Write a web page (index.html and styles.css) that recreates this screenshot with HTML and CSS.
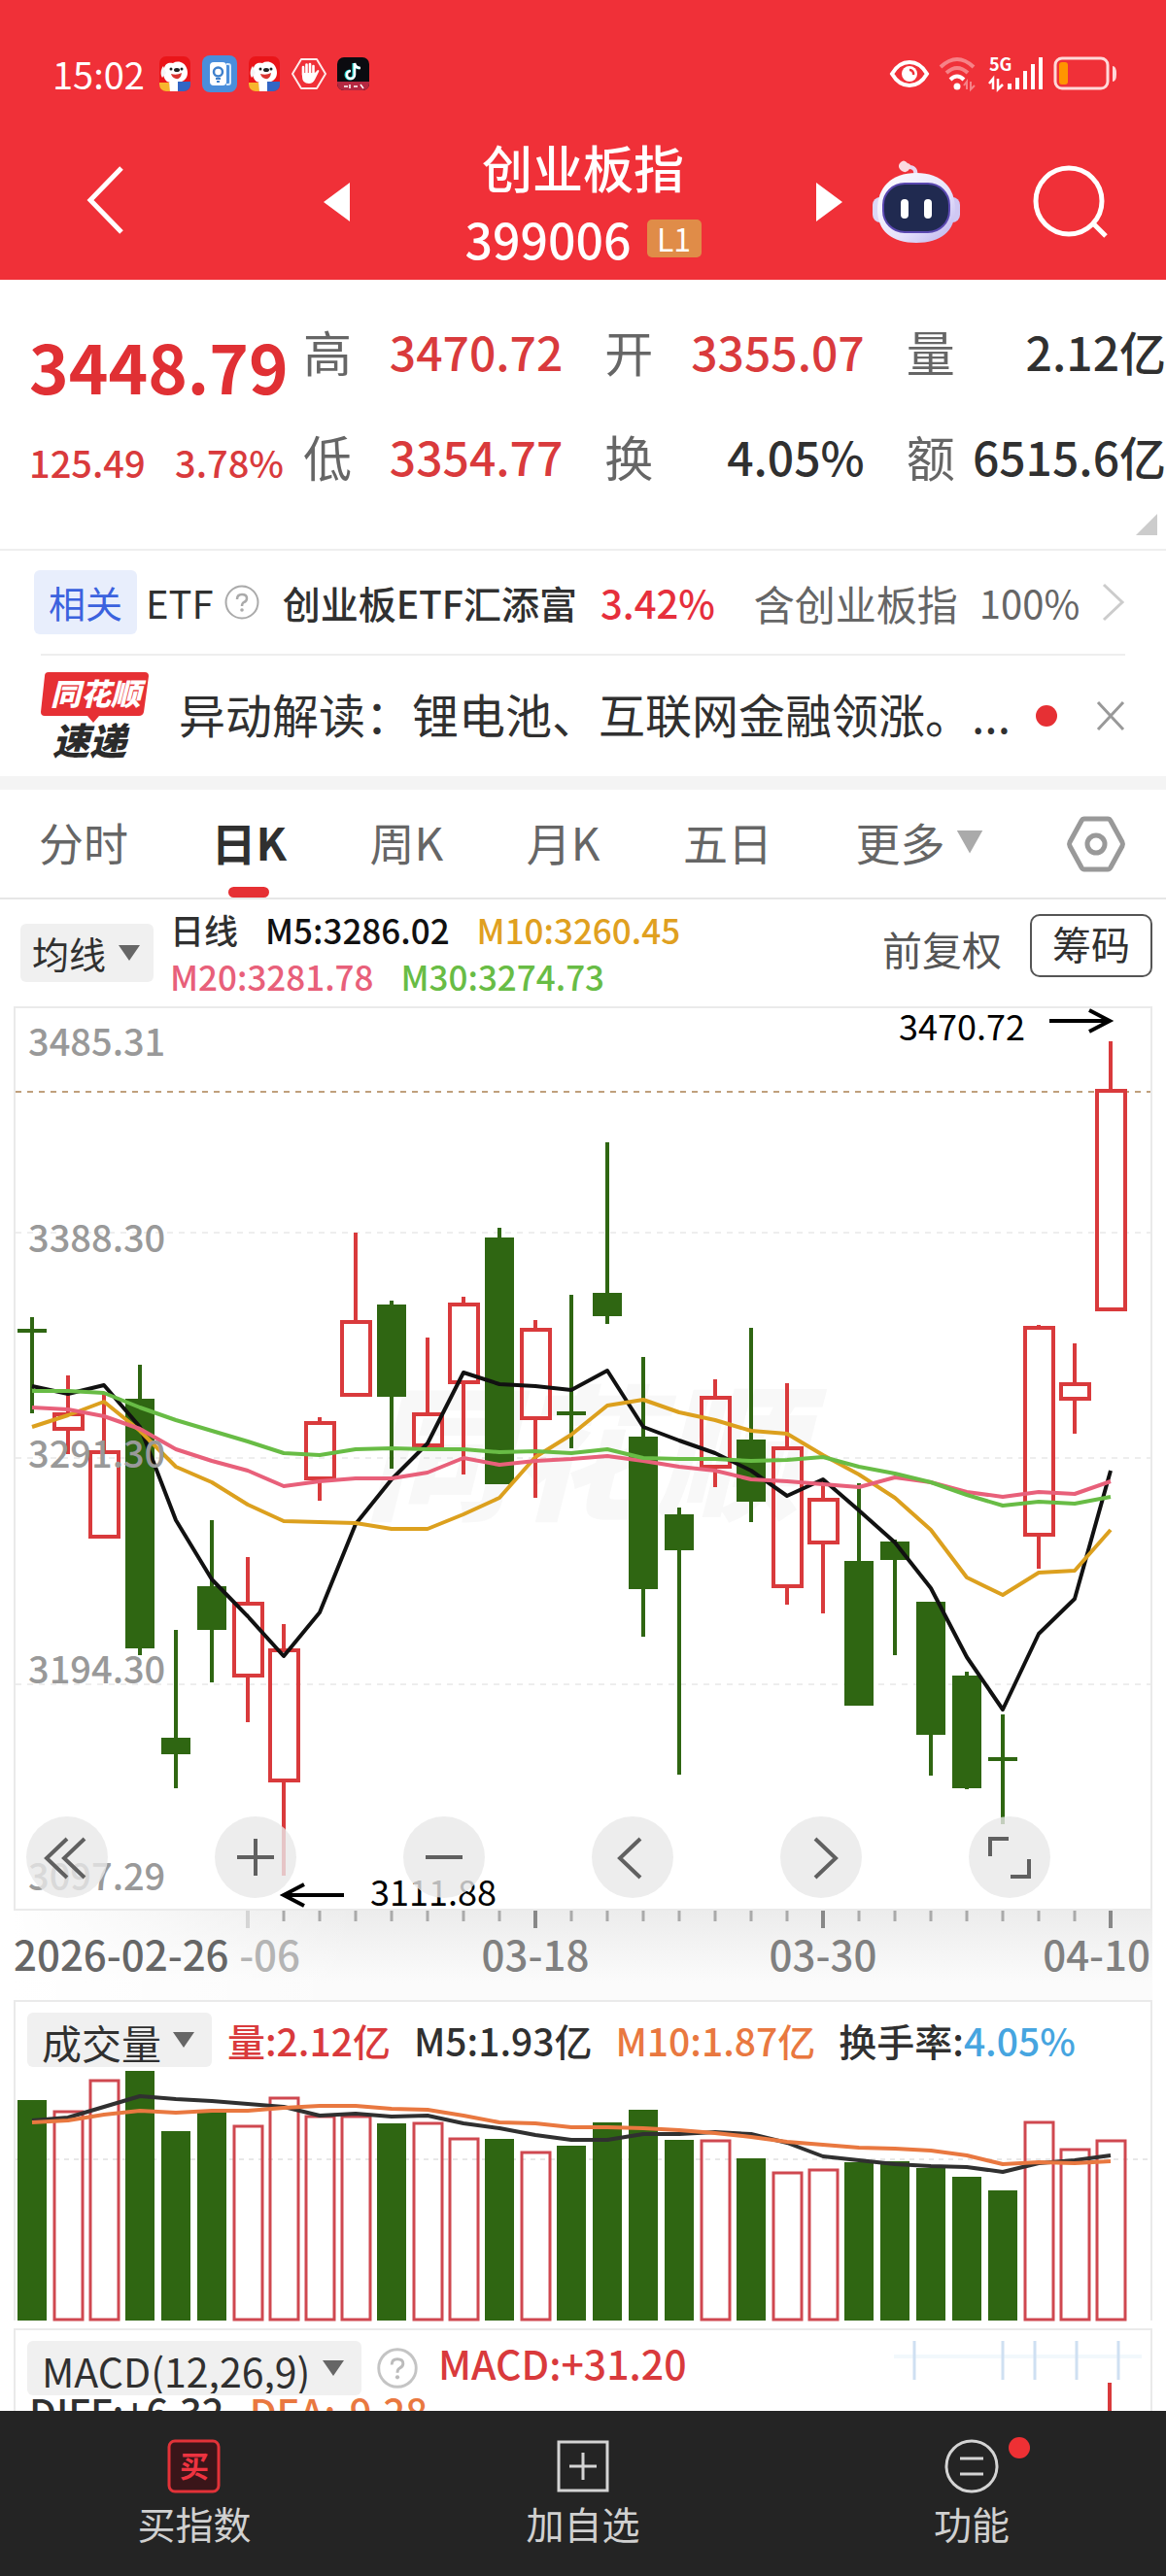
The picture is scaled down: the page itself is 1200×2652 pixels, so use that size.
FILE: index.html
```html
<!DOCTYPE html>
<html lang="zh-CN">
<head>
  <meta charset="UTF-8">
  <meta name="viewport" content="width=device-width, initial-scale=1.0">
  <title>创业板指 399006</title>
  <link rel="stylesheet" href="styles.css">
</head>
<body>
  <div class="app">
    <header class="header">
      <div class="status-bar">
        <span class="time">15:02</span>
        <div class="status-apps">
          <svg width="34" height="36" viewBox="0 0 34 36"><rect x="1" width="32" height="36" rx="7" fill="#ea1519"/><path d="M6 12c1-5 5-6 9-5 5-3 12-1 14 5 2 5 1 10-3 13l-8 4-9-3c-4-3-5-9-3-14z" fill="#fff"/><path d="M5 10c-3 4-3 9-1 12l4-5z" fill="#f5f5f5"/><circle cx="13" cy="13" r="1.500" fill="#222"/><circle cx="24" cy="13" r="1.500" fill="#222"/><ellipse cx="19" cy="14" rx="3" ry="2" fill="#222"/><path d="M13 18q6 2 11-1-1 7-6 6-4-1-5-5z" fill="#d8332f"/><path d="M1 27h10l2 9H8a7 7 0 0 1-7-7z" fill="#f7b52d"/><path d="M11 27h9v9h-8z" fill="#fff"/><path d="M20 26h13v3a7 7 0 0 1-7 7h-6z" fill="#3266c4"/></svg>
          <svg width="36" height="38" viewBox="0 0 36 38"><rect width="36" height="38" rx="8" fill="#4a8edb"/><path d="M25 9h2q2 0 2 2v17q0 2-2 2h-2" fill="none" stroke="#d6e8fb" stroke-width="2"/><rect x="8" y="7" width="17" height="24" rx="4" fill="#fff"/><circle cx="16.500" cy="17" r="4.500" fill="none" stroke="#3f80cc" stroke-width="2.500"/><path d="M14 24h5M15 27h3" stroke="#3f80cc" stroke-width="2"/></svg>
          <svg width="34" height="36" viewBox="0 0 34 36"><rect x="1" width="32" height="36" rx="7" fill="#ea1519"/><path d="M6 12c1-5 5-6 9-5 5-3 12-1 14 5 2 5 1 10-3 13l-8 4-9-3c-4-3-5-9-3-14z" fill="#fff"/><path d="M5 10c-3 4-3 9-1 12l4-5z" fill="#f5f5f5"/><circle cx="13" cy="13" r="1.500" fill="#222"/><circle cx="24" cy="13" r="1.500" fill="#222"/><ellipse cx="19" cy="14" rx="3" ry="2" fill="#222"/><path d="M13 18q6 2 11-1-1 7-6 6-4-1-5-5z" fill="#d8332f"/><path d="M1 27h10l2 9H8a7 7 0 0 1-7-7z" fill="#f7b52d"/><path d="M11 27h9v9h-8z" fill="#fff"/><path d="M20 26h13v3a7 7 0 0 1-7 7h-6z" fill="#3266c4"/></svg>
          <svg width="36" height="34" viewBox="0 0 36 34"><path d="M10 2h16l9 15-9 15H10L1 17z" fill="none" stroke="#ffe9e9" stroke-width="2" stroke-linejoin="round"/><path d="M12 18V10M15.500 17V7.500M19 17V7M22.500 18V9" stroke="#fff" stroke-width="2.600" stroke-linecap="round"/><path d="M11 16h13l3-3q2 0 1 2l-4 8q-2 4-6 4-7 0-7-7z" fill="#fff"/></svg>
          <svg width="33" height="34" viewBox="0 0 33 34"><rect width="33" height="34" rx="7" fill="#0b0b10"/><path d="M0 25h33v2a7 7 0 0 1-7 7H7a7 7 0 0 1-7-7z" fill="#b42841"/><path d="M17 6v12a4 4 0 1 1-4-4M17 6q1 5 6 5" fill="none" stroke="#26e3e3" stroke-width="3"/><path d="M18 6v12a4 4 0 1 1-4-4M18 6q1 5 6 5" fill="none" stroke="#fff" stroke-width="2.500"/><path d="M7 30h4M13 28v4M17 30h4M24 28l3 4" stroke="#fff" stroke-width="1.500"/></svg>
        </div>
        <div class="status-system">
          <svg width="40" height="28" viewBox="0 0 40 28"><path d="M2 14Q9 2 20 2t18 12Q31 26 20 26T2 14z" fill="none" stroke="#fff" stroke-width="4"/><circle cx="20" cy="14" r="8" fill="#fff"/><path d="M20 10a4 4 0 0 1 4 5" fill="none" stroke="#f03038" stroke-width="2.500"/></svg>
          <svg width="42" height="34" viewBox="0 0 42 34"><g fill="none" stroke="#fff" stroke-width="4"><path d="M2 10q17-16 34 0M8 16q11-10 22 0" opacity=".4"/><path d="M12 23q7-7 14 0"/></g><circle cx="19" cy="30" r="3.500" fill="#fff"/><path d="M29 33v-8l-3 4M33 25v8l4-4" stroke="#fff" fill="none" stroke-width="2" opacity=".4"/></svg>
          <svg width="56" height="36" viewBox="0 0 56 36"><text x="0" y="15" font-size="18" font-weight="700" fill="#fff">5G</text><path d="M4 34V23l-4 5M9 23v11l5-5" fill="none" stroke="#fff" stroke-width="2.500"/><path d="M21 34v-6M29 34V22M37 34V15M45 34V8M53 34V1" stroke="#fff" stroke-width="4"/></svg>
          <svg width="66" height="36" viewBox="0 0 66 36"><rect x="2" y="2" width="54" height="31" rx="7" fill="none" stroke="#ffd9d9" stroke-width="3"/><rect x="6" y="6" width="9" height="23" rx="3" fill="#ff9500"/><path d="M61 10q4 0 4 8t-4 8z" fill="#ffd9d9"/></svg>
        </div>
      </div>
      <div class="nav">
        <div class="nav-left">
          <button class="icon-btn" aria-label="返回"><svg width="40" height="72" viewBox="0 0 40 72"><path d="M36 3L4 36l32 33" fill="none" stroke="#fff" stroke-width="5"/></svg></button>
        </div>
        <div class="nav-center">
          <button class="icon-btn" aria-label="上一只"><svg width="27" height="40" viewBox="0 0 27 40"><path d="M27 0v40L0 20z" fill="#fff"/></svg></button>
          <div class="title">
            <h1>创业板指</h1>
            <div class="code">399006 <span class="level">L1</span></div>
          </div>
          <button class="icon-btn" aria-label="下一只"><svg width="27" height="40" viewBox="0 0 27 40"><path d="M0 0v40l27-20z" fill="#fff"/></svg></button>
        </div>
        <div class="nav-right">
          <button class="icon-btn" aria-label="智能助手">
            <svg width="92" height="86" viewBox="0 0 92 86">
              <defs>
                <linearGradient id="head" x1="0" y1="0" x2="1" y2="1"><stop offset="0" stop-color="#fff"/><stop offset=".6" stop-color="#e6e2fb"/><stop offset="1" stop-color="#b9b0ec"/></linearGradient>
              </defs>
              <path d="M45 18q2-11-6-11" fill="none" stroke="#e9d5ee" stroke-width="4"/><path d="M29 3q4-5 8 0 5 1 2 6-3 5-8 2-5-4-2-8z" fill="#fbd9df"/>
              <rect x="1" y="38" width="18" height="26" rx="8" fill="#dcd7f7"/><rect x="73" y="38" width="18" height="26" rx="8" fill="#cfc8f3"/>
              <path d="M46 13c26 0 40 15 40 38 0 22-15 34-40 34S6 73 6 51c0-23 14-38 40-38z" fill="url(#head)"/>
              <rect x="12" y="24" width="68" height="50" rx="22" fill="#202a50" stroke="#5a48b0" stroke-width="2"/>
              <path d="M34 44v12M58 44v12" stroke="#fff" stroke-width="8" stroke-linecap="round"/>
            </svg>
          </button>
          <button class="icon-btn" aria-label="搜索"><svg width="78" height="76" viewBox="0 0 78 76"><circle cx="37" cy="37" r="34" fill="none" stroke="#fff" stroke-width="5"/><path d="M62 60l13 13" stroke="#fff" stroke-width="5"/></svg></button>
        </div>
      </div>
    </header>

    <main class="content">
      <section class="quote">
        <div class="price-box">
          <div class="price">3448.79</div>
          <div class="change"><span>125.49</span><span>3.78%</span></div>
        </div>
        <div class="stats">
          <div class="stat"><span>高</span><b class="up">3470.72</b></div>
          <div class="stat"><span>开</span><b class="up">3355.07</b></div>
          <div class="stat"><span>量</span><b>2.12亿</b></div>
          <div class="stat"><span>低</span><b class="up">3354.77</b></div>
          <div class="stat"><span>换</span><b>4.05%</b></div>
          <div class="stat"><span>额</span><b>6515.6亿</b></div>
        </div>
        <div class="corner"></div>
      </section>

      <a class="etf" href="#">
        <span class="tag">相关</span>
        <span class="etf-label">ETF</span>
        <svg class="help" width="36" height="36" viewBox="0 0 36 36"><circle cx="18" cy="18" r="16.500" fill="none" stroke="#aaa" stroke-width="2"/><path d="M13 15q0-5 5-5t5 4q0 3-3 4-2 1-2 4" fill="none" stroke="#aaa" stroke-width="2.500"/><circle cx="18" cy="26" r="1.800" fill="#aaa"/></svg>
        <span class="etf-name">创业板ETF汇添富</span>
        <span class="etf-change">3.42%</span>
        <span class="etf-hold">含创业板指</span>
        <span class="etf-ratio">100%</span>
        <svg class="arrow" width="24" height="40" viewBox="0 0 24 40"><path d="M2 2l19 18L2 38" fill="none" stroke="#ccc" stroke-width="3"/></svg>
      </a>

      <div class="news">
        <svg class="news-logo" width="112" height="92" viewBox="0 0 112 92">
          <path d="M8 1h99q4 0 4 4l-5 37q-1 4-5 4H60l-6 7-6-7H4q-4 0-4-4L4 5q0-4 4-4z" fill="#e63034"/>
          <text x="10" y="35" font-size="31" font-weight="900" font-style="italic" fill="#fff">同花顺</text>
          <text x="12" y="86" font-size="38" font-weight="900" font-style="italic" fill="#2b2b2b">速递</text>
        </svg>
        <a class="news-text" href="#">异动解读：锂电池、互联网金融领涨。...</a>
        <span class="dot"></span>
        <button class="icon-btn" aria-label="关闭"><svg width="30" height="32" viewBox="0 0 30 32"><path d="M2 2l26 28M28 2L2 30" stroke="#999" stroke-width="3"/></svg></button>
      </div>

      <nav class="tabs">
        <button class="tab">分时</button>
        <button class="tab active">日K</button>
        <button class="tab">周K</button>
        <button class="tab">月K</button>
        <button class="tab">五日</button>
        <button class="tab more">更多</button>
        <button class="icon-btn" aria-label="设置"><svg width="62" height="58" viewBox="0 0 62 58"><path d="M19 3h24q2 0 3 2l12 22q1 2 0 4L46 53q-1 2-3 2H19q-2 0-3-2L4 31q-1-2 0-4L16 5q1-2 3-2z" fill="none" stroke="#999" stroke-width="5"/><circle cx="31" cy="29" r="9" fill="none" stroke="#999" stroke-width="5"/></svg></button>
      </nav>

      <div class="ma-bar">
        <label class="drop"><select aria-label="主图指标"><option>均线</option></select></label>
        <div class="legend">
          <div class="legend-row"><span>日线</span><span class="m5">M5:3286.02</span><span class="m10">M10:3260.45</span></div>
          <div class="legend-row"><span class="m20">M20:3281.78</span><span class="m30">M30:3274.73</span></div>
        </div>
        <button class="adjust">前复权</button>
        <button class="chips">筹码</button>
      </div>

      <section class="panel kline">
        <svg id="kline" viewBox="16 1037 1168 927"></svg>
        <div class="tools">
          <button aria-label="最早"><svg viewBox="0 0 84 84"><path d="M42 23L21 43l21 20M60 23L39 43l21 20"/></svg></button>
          <button aria-label="放大"><svg viewBox="0 0 84 84"><path d="M23 42h38M42 23v38"/></svg></button>
          <button aria-label="缩小"><svg viewBox="0 0 84 84"><path d="M23 42h38"/></svg></button>
          <button aria-label="左移"><svg viewBox="0 0 84 84"><path d="M50 23L29 43l21 20"/></svg></button>
          <button aria-label="右移"><svg viewBox="0 0 84 84"><path d="M36 23l21 20-21 20"/></svg></button>
          <button aria-label="全屏"><svg viewBox="0 0 84 84"><path d="M22 41V23h19M62 44v18H43"/></svg></button>
        </div>
      </section>
      <div class="axis"><svg id="axis" viewBox="14 1966 1172 92"></svg></div>

      <section class="panel volume">
        <div class="panel-head">
          <label class="drop"><select aria-label="副图指标一"><option>成交量</option></select></label>
          <span class="up">量:2.12亿</span>
          <span>M5:1.93亿</span>
          <span class="orange">M10:1.87亿</span>
          <span>换手率:<span class="blue">4.05%</span></span>
        </div>
        <svg id="volume" viewBox="16 2131 1168 257"></svg>
      </section>

      <section class="panel macd">
        <div class="panel-head">
          <label class="drop"><select aria-label="副图指标二"><option>MACD(12,26,9)</option></select></label>
          <svg class="help-lg" width="42" height="42" viewBox="0 0 36 36"><circle cx="18" cy="18" r="16.500" fill="none" stroke="#c4c4c4" stroke-width="2.500"/><path d="M13 15q0-5 5-5t5 4q0 3-3 4-2 1-2 4" fill="none" stroke="#bbb" stroke-width="2.500"/><circle cx="18" cy="26" r="1.800" fill="#bbb"/></svg>
          <span class="macd-now up">MACD:+31.20</span>
        </div>
        <div class="macd-values"><span>DIFF:+6.32</span><span class="orange">DEA:-9.28</span></div>
        <svg class="macd-chart" width="270" height="110" viewBox="914 2398 270 110">
          <path d="M920 2425h255" stroke="#f2f8fc" stroke-width="4"/>
          <path d="M941 2409v40M1032 2409v40M1065 2409v40M1108 2409v40M1151 2409v40" stroke="#cfe0f2" stroke-width="3"/>
          <path d="M1142 2452v56" stroke="#d93a3c" stroke-width="4"/>
        </svg>
      </section>
    </main>

    <footer class="bottom-bar">
      <button class="bar-item">
        <svg width="56" height="56" viewBox="0 0 56 56"><rect x="2" y="2" width="51" height="52" rx="6" fill="#3a1519" stroke="#e23238" stroke-width="3"/><text x="28" y="39" font-size="30" font-weight="700" text-anchor="middle" fill="#ee3340">买</text></svg>
        <span>买指数</span>
      </button>
      <button class="bar-item">
        <svg width="56" height="56" viewBox="0 0 56 56"><path d="M3 3h50v50H3zM14 28h28M28 14v28" fill="none" stroke="#d4d4d4" stroke-width="3"/></svg>
        <span>加自选</span>
      </button>
      <button class="bar-item has-dot">
        <svg width="56" height="56" viewBox="0 0 56 56"><circle cx="28" cy="28" r="26" fill="none" stroke="#d4d4d4" stroke-width="3"/><path d="M16 20h24M16 36h24" stroke="#d4d4d4" stroke-width="3"/></svg>
        <span>功能</span>
      </button>
    </footer>
  </div>

  <script src="chart.js"></script>
</body>
</html>
```

FILE: styles.css
```css
* {
  box-sizing: border-box;
}

body {
  margin: 0;
  background: #fff;
  color: #303030;
  font-family: "Noto Sans CJK SC", sans-serif;
}

button, select {
  margin: 0;
  padding: 0;
  border: none;
  background: none;
  color: inherit;
  font-family: inherit;
  cursor: pointer;
}

a {
  color: inherit;
  text-decoration: none;
}

svg {
  display: block;
  flex-shrink: 0;
  overflow: visible;
}

.app {
  display: flex;
  flex-direction: column;
  height: 100vh;
}

.content {
  flex: 1;
  min-height: 0;
  overflow: hidden;
}

.up {
  color: #d93a3c;
}

.orange {
  color: #e97840;
}

.blue {
  color: #46a5e0;
}

/* header */
.header {
  background: #f03038;
  color: #fff;
}

.status-bar {
  display: flex;
  align-items: center;
  height: 104px;
  padding: 48px 50px 0 54px;
}

.time {
  font-size: 38px;
  line-height: 48px;
}

.status-apps {
  display: flex;
  align-items: center;
  gap: 11px;
  margin-left: 14px;
}

.status-system {
  display: flex;
  align-items: center;
  gap: 10px;
  margin-left: auto;
}

.nav {
  display: grid;
  grid-template-columns: 1fr 534px 1fr;
  align-items: center;
  height: 184px;
  padding-top: 24px;
}

.nav-left {
  padding-left: 89px;
}

.nav-center, .nav-right {
  display: flex;
  align-items: center;
  justify-content: space-between;
}

.nav-right {
  padding: 0 59px 0 30px;
}

.title {
  padding-top: 2px;
}

.title h1 {
  margin: 0;
  font-size: 52px;
  font-weight: 500;
  line-height: 72px;
  text-align: center;
}

.code {
  display: flex;
  align-items: center;
  gap: 16px;
  font-size: 50px;
  font-weight: 500;
  line-height: 74px;
}

.level {
  width: 56px;
  border-radius: 5px;
  background: #e08c48;
  font-size: 32px;
  font-weight: 400;
  line-height: 39px;
  text-align: center;
}

/* quote */
.quote {
  position: relative;
  display: grid;
  grid-template-columns: 282px 1fr;
  padding: 19px 0 42px 30px;
  border-bottom: 2px solid #eee;
}

.price {
  color: #e03034;
  font-size: 69px;
  font-weight: 700;
  line-height: 138px;
}

.change {
  display: flex;
  justify-content: space-between;
  padding-right: 20px;
  color: #d93a3c;
  font-size: 38px;
  font-weight: 500;
  line-height: 62px;
}

.stats {
  display: grid;
  grid-template-columns: repeat(3, 1fr);
  column-gap: 43px;
}

.stat {
  display: flex;
  justify-content: space-between;
  font-size: 48px;
  line-height: 108px;
  white-space: nowrap;
}

.stat span {
  color: #666;
  font-size: 50px;
}

.stat b {
  font-weight: 500;
}

.corner {
  position: absolute;
  right: 9px;
  bottom: 14px;
  width: 22px;
  height: 22px;
  background: #ccc;
  clip-path: polygon(100% 0, 100% 100%, 0 100%);
}

/* related etf */
.etf {
  display: flex;
  align-items: center;
  height: 106px;
  padding: 0 42px 0 35px;
  font-size: 40px;
  white-space: nowrap;
}

.tag {
  padding: 0 15px;
  border-radius: 6px;
  background: #e8eefc;
  color: #3b62de;
  font-size: 38px;
  line-height: 66px;
}

.etf-label {
  margin-left: 9px;
}

.help {
  margin-left: 11px;
}

.etf-name {
  margin-left: 24px;
  font-size: 39px;
  font-weight: 500;
}

.etf-change {
  margin-left: 24px;
  color: #e62f3c;
  font-weight: 500;
}

.etf-hold {
  margin-left: 40px;
  color: #666;
  font-size: 42px;
}

.etf-ratio {
  margin-left: 22px;
  color: #666;
}

.arrow {
  margin-left: auto;
}

/* news */
.news {
  display: flex;
  align-items: center;
  height: 126px;
  margin: 0 42px;
  border-top: 2px solid #eee;
}

.news-text {
  flex: 1;
  margin-left: 30px;
  padding-bottom: 6px;
  font-size: 48px;
  white-space: nowrap;
}

.dot {
  width: 22px;
  height: 22px;
  margin: 0 40px 0 10px;
  border-radius: 50%;
  background: #e63034;
}

/* tabs */
.tabs {
  display: flex;
  align-items: center;
  justify-content: space-between;
  height: 127px;
  padding: 0 41px 0 40px;
  border-top: 14px solid #f4f4f4;
  border-bottom: 2px solid #e6e6e6;
}

.tab {
  position: relative;
  padding-bottom: 4px;
  color: #666;
  font-size: 46px;
  line-height: 107px;
}

.tab.active {
  color: #303030;
  font-weight: 700;
}

.tab.active::after {
  content: "";
  position: absolute;
  left: 50%;
  bottom: 0;
  width: 42px;
  height: 11px;
  margin-left: -21px;
  border-radius: 6px;
  background: #e63034;
}

.more {
  display: flex;
  align-items: center;
  gap: 12px;
}

.more::after {
  content: "";
  width: 27px;
  height: 24px;
  background: #aaa;
  clip-path: polygon(0 0, 100% 0, 50% 100%);
}

/* moving averages */
.ma-bar {
  display: flex;
  align-items: center;
  height: 110px;
  padding: 0 14px 0 21px;
}

.drop {
  position: relative;
  display: block;
}

.drop select {
  display: block;
  height: 60px;
  padding: 0 48px 2px 12px;
  border-radius: 6px;
  background: #f0f0f0;
  font-size: 38px;
  appearance: none;
}

.drop::after {
  content: "";
  position: absolute;
  top: 50%;
  right: 14px;
  width: 22px;
  height: 16px;
  margin-top: -8px;
  background: #666;
  clip-path: polygon(0 0, 100% 0, 50% 100%);
  pointer-events: none;
}

.legend {
  flex: 1;
  margin-left: 17px;
  font-size: 35px;
  font-weight: 500;
  line-height: 48px;
}

.legend-row {
  display: flex;
  gap: 28px;
}

.m5 {
  color: #111;
}

.m10 {
  color: #e0a020;
}

.m20 {
  color: #e8607a;
}

.m30 {
  color: #68bc45;
}

.adjust {
  padding-bottom: 10px;
  font-size: 41px;
  color: #555;
}

.chips {
  width: 126px;
  height: 65px;
  margin: 0 0 16px 29px;
  padding-bottom: 4px;
  border: 2px solid #555;
  border-radius: 10px;
  font-size: 40px;
  line-height: 56px;
}

/* charts */
.panel {
  position: relative;
  margin: 0 14px;
  border: 2px solid #eaeaea;
}

#kline, #axis, #volume {
  width: 100%;
  height: auto;
}

.tools {
  position: absolute;
  left: 11px;
  right: 103px;
  bottom: 11px;
  display: flex;
  justify-content: space-between;
}

.tools button {
  width: 84px;
  height: 84px;
  border-radius: 50%;
  background: rgba(232, 232, 232, 0.8);
}

.tools path {
  fill: none;
  stroke: #606060;
  stroke-width: 4;
}

.axis {
  margin: 0 14px;
  background: linear-gradient(90deg, #fff, rgba(255, 255, 255, 0) 30%), linear-gradient(#ececec, #fbfbfb 80%);
}

.panel-head {
  display: flex;
  align-items: center;
  gap: 24px;
  padding: 11px 12px 4px;
  font-size: 39px;
  font-weight: 500;
  line-height: 56px;
  white-space: nowrap;
}

.panel-head .drop {
  margin-right: -8px;
}

.panel-head select {
  height: 56px;
  padding: 0 52px 2px 15px;
  font-size: 41px;
}

.panel-head .drop::after {
  right: 18px;
}

.volume {
  border-bottom: none;
}

.macd {
  height: 240px;
  margin-top: 8px;
}

.macd .panel-head {
  font-size: 41px;
}

.macd-now {
  margin-left: -3px;
  padding-bottom: 12px;
  line-height: 44px;
}

.macd-values {
  display: flex;
  gap: 26px;
  padding-left: 14px;
  font-size: 40px;
  font-weight: 500;
  line-height: 24px;
}

.macd-chart {
  position: absolute;
  top: 0;
  right: 0;
}

/* bottom bar */
.bottom-bar {
  position: relative;
  display: flex;
  height: 170px;
  background: #242424;
}

.bar-item {
  position: relative;
  flex: 1;
  display: flex;
  flex-direction: column;
  align-items: center;
  padding-top: 29px;
  color: #d0d0d0;
  font-size: 39px;
  line-height: 60px;
}

.has-dot::after {
  content: "";
  position: absolute;
  top: 27px;
  left: 50%;
  width: 22px;
  height: 22px;
  margin-left: 38px;
  border-radius: 50%;
  background: #ee3034;
}
```

FILE: chart.js
```js
const RED = '#d93a3c';
const GREEN = '#2f6612';
const STEP = 37;
const START = 33;

// [up, high, top, bottom, low]
const candles = [
  [0, 1355, 1367, 1371, 1454], [1, 1415, 1453, 1472, 1496], [1, 1432, 1492, 1583, 1583],
  [0, 1404, 1439, 1696, 1703], [0, 1677, 1788, 1805, 1840], [0, 1564, 1632, 1677, 1731],
  [1, 1602, 1648, 1726, 1772], [1, 1671, 1696, 1834, 1930], [1, 1458, 1462, 1523, 1544],
  [1, 1268, 1358, 1437, 1437], [0, 1338, 1342, 1437, 1511], [1, 1376, 1453, 1489, 1489],
  [1, 1334, 1340, 1424, 1517], [0, 1263, 1273, 1527, 1527], [1, 1358, 1366, 1461, 1541],
  [0, 1332, 1452, 1456, 1490], [0, 1175, 1330, 1354, 1362], [0, 1396, 1478, 1635, 1684],
  [0, 1551, 1558, 1595, 1826], [1, 1419, 1436, 1511, 1530], [0, 1366, 1481, 1545, 1566],
  [1, 1423, 1488, 1634, 1651], [1, 1523, 1541, 1589, 1660], [0, 1526, 1606, 1755, 1755],
  [0, 1584, 1586, 1605, 1703], [0, 1648, 1648, 1785, 1827], [0, 1720, 1724, 1840, 1841],
  [0, 1764, 1808, 1812, 1877], [1, 1363, 1364, 1581, 1614], [1, 1382, 1422, 1441, 1475],
  [1, 1071, 1120, 1349, 1349]
];

const ma = [
  ['#111', [1426, 1434, 1425, 1468, 1564, 1625, 1663, 1704, 1659, 1568, 1522, 1485, 1412, 1424, 1426, 1430, 1410, 1468, 1482, 1495, 1513, 1539, 1522, 1554, 1587, 1634, 1705, 1759, 1681, 1645, 1513]],
  ['#dca01e', [1468, 1456, 1442, 1472, 1509, 1525, 1548, 1565, 1566, 1567, 1573, 1573, 1558, 1541, 1499, 1476, 1446, 1440, 1453, 1461, 1472, 1475, 1497, 1517, 1541, 1574, 1623, 1641, 1618, 1616, 1574]],
  ['#e8607a', [1448, 1450, 1457, 1470, 1491, 1503, 1513, 1529, 1524, 1521, 1521, 1515, 1500, 1507, 1503, 1501, 1498, 1503, 1509, 1513, 1522, 1524, 1527, 1530, 1520, 1525, 1535, 1540, 1535, 1537, 1524]],
  ['#68bc45', [1431, 1431, 1433, 1448, 1461, 1472, 1483, 1495, 1497, 1491, 1490, 1491, 1491, 1494, 1493, 1495, 1491, 1500, 1501, 1501, 1503, 1502, 1499, 1509, 1516, 1525, 1538, 1549, 1545, 1547, 1540]]
];

const volumes = [2161, 2172, 2140, 2131, 2193, 2174, 2187, 2158, 2177, 2177, 2185, 2184, 2200, 2201, 2214, 2208, 2184, 2171, 2202, 2202, 2221, 2235, 2232, 2225, 2224, 2231, 2240, 2254, 2183, 2211, 2202];

const volumeMa = [
  ['#303030', [2182, 2179, 2168, 2157, 2160, 2162, 2165, 2168, 2177, 2175, 2178, 2177, 2185, 2190, 2197, 2202, 2202, 2196, 2196, 2194, 2196, 2205, 2219, 2223, 2227, 2229, 2230, 2235, 2226, 2223, 2218]],
  ['#e97840', [2184, 2182, 2176, 2172, 2174, 2172, 2172, 2169, 2167, 2167, 2170, 2171, 2177, 2184, 2185, 2189, 2189, 2190, 2192, 2195, 2199, 2204, 2207, 2210, 2211, 2213, 2218, 2227, 2225, 2226, 2224]]
];

const x = i => START + i * STEP;

function polyline(color, points, width) {
  return `<polyline fill="none" stroke="${color}" stroke-width="${width}" stroke-linejoin="round" points="${points.map((y, i) => x(i) + ',' + y).join(' ')}"/>`;
}

function dashed(y, color, dash, width) {
  return `<path d="M16 ${y}H1184" stroke="${color}" stroke-width="${width}" stroke-dasharray="${dash}"/>`;
}

function label(tx, y, text, attrs) {
  return `<text x="${tx}" y="${y}" ${attrs}>${text}</text>`;
}

function drawKline() {
  let s = label(600, 1552, '同花顺', 'font-size="150" font-weight="900" font-style="italic" text-anchor="middle" fill="#f8f8f8"');
  [1268, 1500, 1733].forEach(y => s += dashed(y, '#dcdcdc', '6 6', 1));
  s += dashed(1123, '#c0a07c', '6 6', 2);

  candles.forEach(([up, high, top, bottom, low], i) => {
    const c = up ? RED : GREEN;
    s += `<path d="M${x(i)} ${high}V${top}M${x(i)} ${bottom}V${low}" stroke="${c}" stroke-width="4"/>`;
    s += up
      ? `<rect x="${x(i) - 14}" y="${top + 2}" width="29" height="${bottom - top - 4}" fill="none" stroke="${c}" stroke-width="4"/>`
      : `<rect x="${x(i) - 15}" y="${top}" width="30" height="${bottom - top}" fill="${c}"/>`;
  });
  ma.forEach(([c, points]) => s += polyline(c, points, 4));

  [['3485.31', 1086], ['3388.30', 1288], ['3291.30', 1510], ['3194.30', 1732], ['3097.29', 1945]]
    .forEach(([t, y]) => s += label(29, y, t, 'font-size="38" font-weight="500" fill="#999"'));

  // high and low of the visible range
  s += label(925, 1070, '3470.72', 'font-size="36" fill="#000"');
  s += '<path d="M1080 1050h62M1121 1039l21 11-21 11" fill="none" stroke="#000" stroke-width="4"/>';
  s += label(381, 1961, '3111.88', 'font-size="36" fill="#000"');
  s += '<path d="M354 1950h-62M313 1939l-21 11 21 11" fill="none" stroke="#000" stroke-width="4"/>';
  document.getElementById('kline').innerHTML = s;
}

function drawAxis() {
  let s = '';
  for (let i = 6; i <= 30; i++) {
    const major = (i - 6) % 8 === 0;
    const c = i === 6 ? '#d5d5d5' : major ? '#888' : '#aaa';
    s += `<path d="M${x(i)} 1966v${major ? 18 : 11}" stroke="${c}" stroke-width="${major ? 4 : 3}"/>`;
  }
  const font = 'font-size="42" font-weight="500"';
  s += label(14, 2028, '2026-02-26', font + ' fill="#666"');
  s += label(309, 2028, '-06', font + ' text-anchor="end" fill="#b4b4b4"');
  s += label(551, 2028, '03-18', font + ' text-anchor="middle" fill="#808080"');
  s += label(847, 2028, '03-30', font + ' text-anchor="middle" fill="#808080"');
  s += label(1184, 2028, '04-10', font + ' text-anchor="end" fill="#808080"');
  document.getElementById('axis').innerHTML = s;
}

function drawVolume() {
  let s = dashed(2222, '#d0d0d0', '5 5', 1);
  volumes.forEach((top, i) => {
    s += candles[i][0]
      ? `<rect x="${x(i) - 14}" y="${top + 1}" width="29" height="${2386 - top}" fill="none" stroke="#cf4850" stroke-width="3"/>`
      : `<rect x="${x(i) - 15}" y="${top}" width="30" height="${2388 - top}" fill="${GREEN}"/>`;
  });
  volumeMa.forEach(([c, points]) => s += polyline(c, points, 4));
  document.getElementById('volume').innerHTML = s;
}

drawKline();
drawAxis();
drawVolume();
```
